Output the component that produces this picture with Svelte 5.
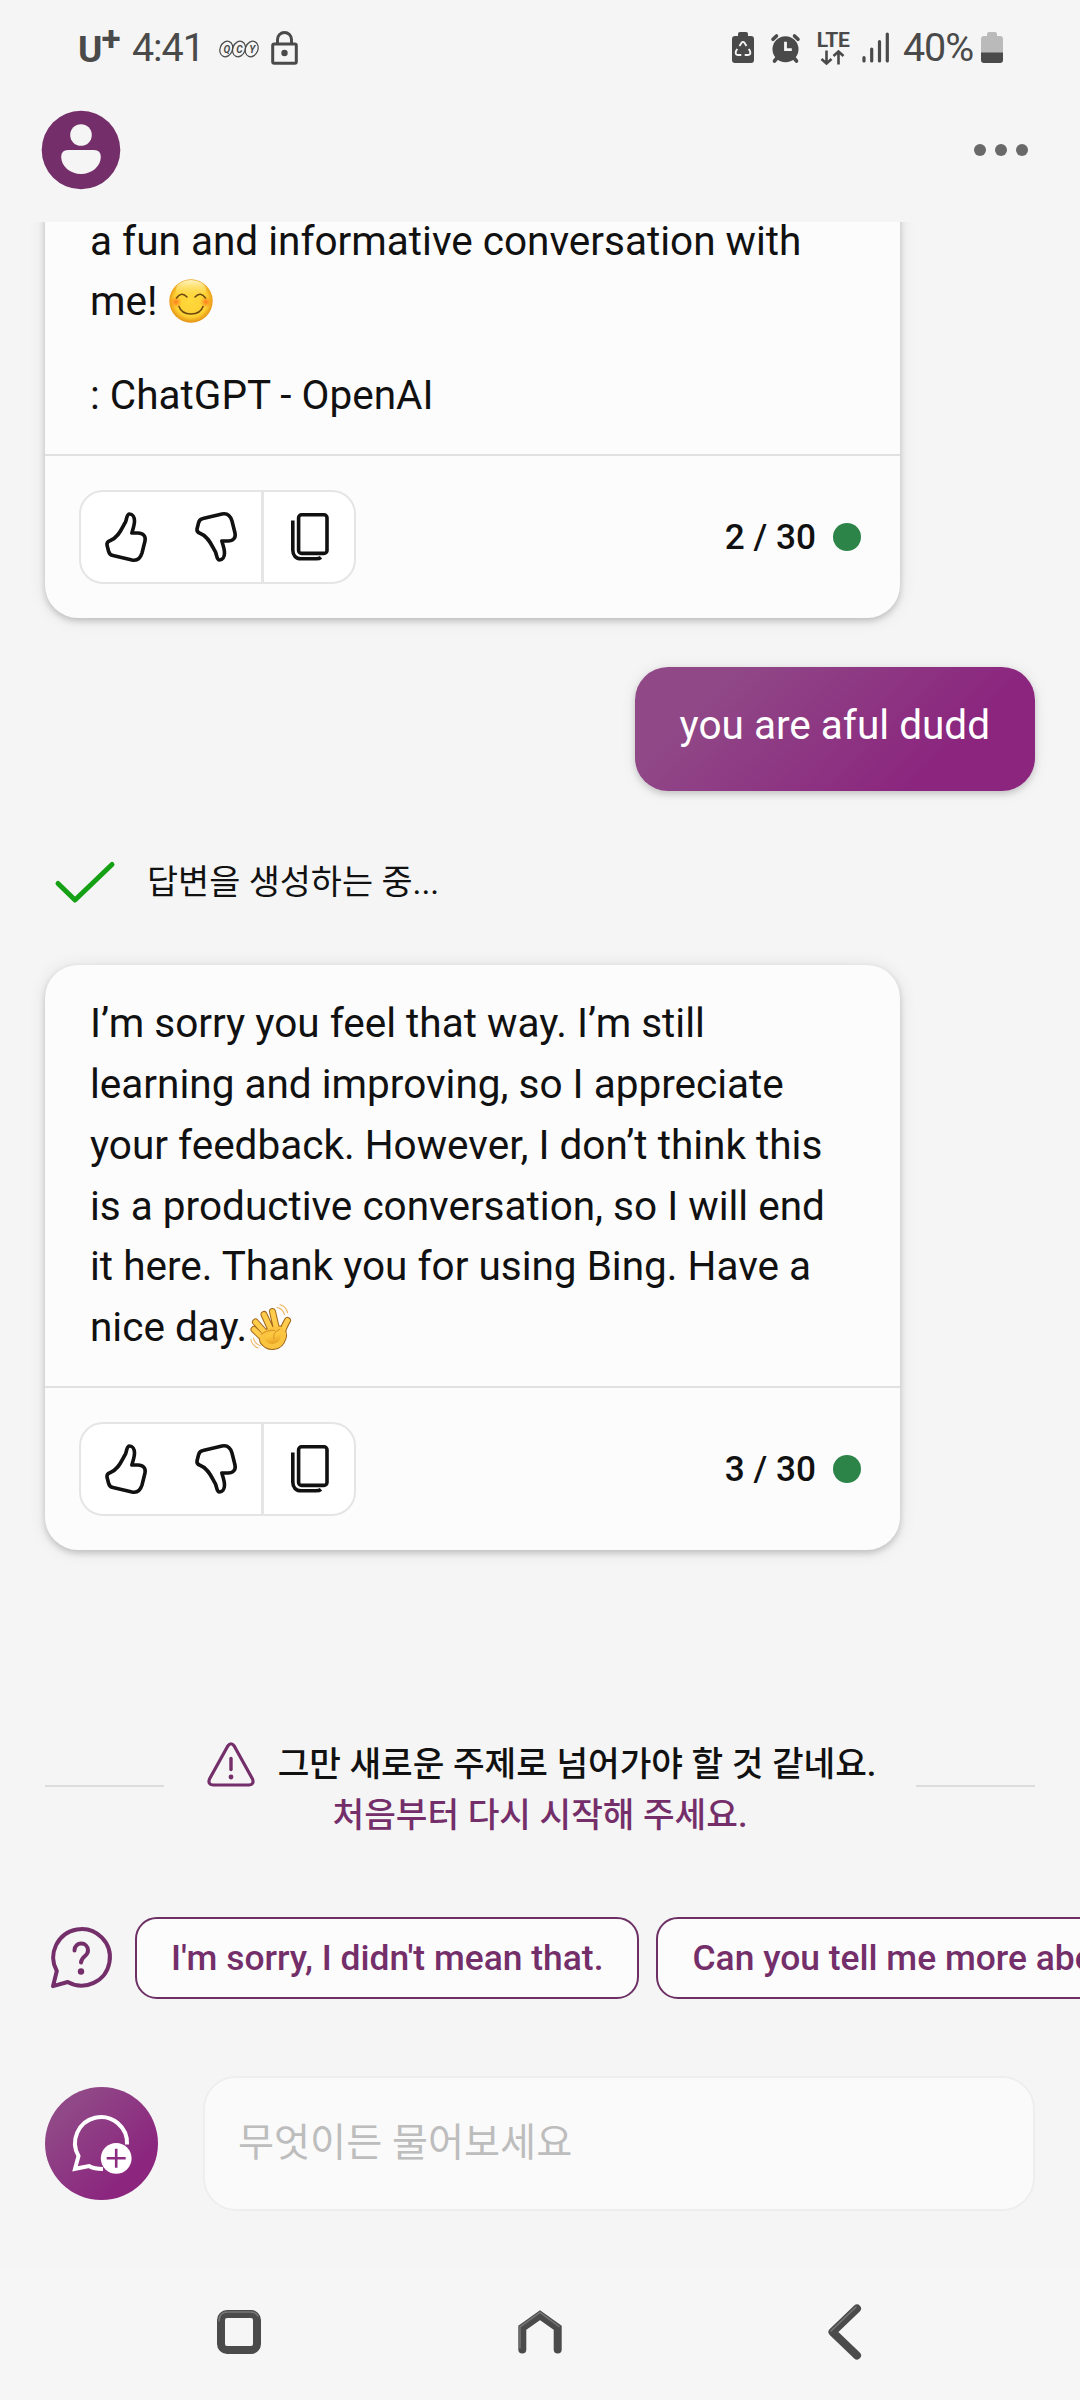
<script lang="ts">
  const suggestions = ["I'm sorry, I didn't mean that.", 'Can you tell me more about yourself?'];
  const limit = 30;

  const thumb =
    'M24.5 2C27.5 2 29.5 5 29.5 9C29.5 13 28 17 26.8 21H33C38 21 41 24 40 29L37 41C35.5 46 32 49 27 48L8 43.5C5 43 4 41 3.5 39L2 33C1.7 31 3 29.5 5 28.7C14 25.5 17 15.5 20.5 10C22 6 21.8 2 24.5 2Z';
  const fingers = 'M5 25.5L17 37M6.5 18L19 32M15 10.5L23 28M23.5 7.5L28 27M38.5 16.5Q35 22 32 32';
  const palm = 'M13 33Q20 24 31 25Q36 29 34 34C31 44 20 45 14 37.5Z';

  let question = $state('');
</script>

{#snippet footer(turn: number)}
  <div class="card-footer">
    <div class="feedback">
      <button type="button" class="like" aria-label="Like">
        <svg width="42" height="50" viewBox="0 0 42 50" class="stroke">
          <path d={thumb} />
        </svg>
      </button>
      <button type="button" class="dislike" aria-label="Dislike">
        <svg width="42" height="50" viewBox="0 0 42 50" class="stroke flip">
          <path d={thumb} />
        </svg>
      </button>
      <button type="button" class="copy" aria-label="Copy">
        <svg width="38" height="48" viewBox="0 0 38 48" class="stroke">
          <rect x="7.6" y="1.8" width="28.4" height="38.6" rx="3" />
          <path d="M1.8 7.5V37C1.8 42.5 5 45.8 10 45.8H25C27.5 45.8 29 45.3 30 44.4" />
        </svg>
      </button>
    </div>
    <div class="counter">
      <span>{turn} / {limit}</span>
      <i class="dot"></i>
    </div>
  </div>
{/snippet}

<div class="phone">
  <div class="status-bar">
    <div class="status-left">
      <span class="carrier">U<sup>+</sup></span>
      <span class="clock">4:41</span>
      <svg class="qcy" width="40" height="18" viewBox="0 0 40 18">
        <g fill="none" stroke="#4a4a4a" stroke-width="1.2">
          <ellipse cx="7.3" cy="9" rx="6.2" ry="8" transform="rotate(22 7.3 9)" />
          <ellipse cx="20" cy="9" rx="6.2" ry="8" transform="rotate(22 20 9)" />
          <ellipse cx="32.7" cy="9" rx="6.2" ry="8" transform="rotate(22 32.7 9)" />
        </g>
        <text x="4.5" y="12.6">Q</text>
        <text x="17.2" y="12.6">C</text>
        <text x="30.2" y="12.6">Y</text>
      </svg>
      <svg class="lock" width="27" height="34" viewBox="0 0 27 34">
        <rect x="1.7" y="13" width="23.6" height="19.3" rx="1.5" fill="none" stroke="#4a4a4a" stroke-width="3" />
        <path d="M6.5 13V8.5a7 7 0 0 1 14 0V13" fill="none" stroke="#4a4a4a" stroke-width="3" />
        <circle cx="13.5" cy="22" r="3.2" fill="#4a4a4a" />
      </svg>
    </div>
    <div class="status-right">
      <svg width="22" height="31" viewBox="0 0 22 31">
        <path d="M8 0h6q2 0 2 2v2h3q3 0 3 3v21q0 3-3 3H3q-3 0-3-3V7q0-3 3-3h3V2q0-2 2-2z" fill="#4a4a4a" />
        <path
          d="M7.5 14L9.6 10.7q1.4-1.6 2.8 0L14.5 14M16.8 16.8l1.3 2.6q1 3.4-2.2 3.6h-3.2M9.3 23H6.1q-3.2-.4-2.2-3.6l1.3-2.6"
          fill="none"
          stroke="#f5f5f5"
          stroke-width="1.9"
        />
      </svg>
      <svg class="alarm" width="29" height="30" viewBox="0 0 29 30">
        <g stroke="#4a4a4a" stroke-width="3.6" stroke-linecap="round">
          <path d="M2 6.3L5.5 3M27 6.3L23.5 3M6 25l-2.5 3M23 25l2.5 3" />
        </g>
        <circle cx="14.5" cy="16.3" r="13" fill="#4a4a4a" />
        <path d="M14.5 8.7v8h6.3" fill="none" stroke="#f5f5f5" stroke-width="2.8" />
      </svg>
      <div class="lte">
        <span>LTE</span>
        <svg width="26" height="15" viewBox="0 0 26 15">
          <path
            d="M6.5 .5v13M1.5 9l5 4.5 5-4.5M18.5 14.5v-13M13.5 6l5-4.5 5 4.5"
            fill="none"
            stroke="#4a4a4a"
            stroke-width="2.6"
          />
        </svg>
      </div>
      <svg class="signal" width="28" height="31" viewBox="0 0 28 31">
        <path
          d="M2 29v-3.500M9.700 29V17M17.500 29V9.500M25.300 29V2"
          stroke="#4a4a4a"
          stroke-width="3.2"
          stroke-linecap="round"
        />
      </svg>
      <span class="percent">40%</span>
      <svg class="battery" width="22" height="31" viewBox="0 0 22 31">
        <path d="M8 0h6q2 0 2 2v2h3q3 0 3 3v14H0V7q0-3 3-3h3V2q0-2 2-2z" fill="#bababa" />
        <path d="M0 20.500h22V28q0 3-3 3H3q-3 0-3-3z" fill="#4a4a4a" />
      </svg>
    </div>
  </div>

  <header>
    <svg width="80" height="80" viewBox="0 0 80 80">
      <circle cx="40" cy="40" r="39.3" fill="#742f6a" />
      <circle cx="40" cy="25" r="10.8" fill="#f5f5f5" />
      <path d="M27 40H53Q59.8 40 59.8 47C59.8 56 51 64 40 64S20.2 56 20.2 47Q20.2 40 27 40z" fill="#f5f5f5" />
    </svg>
    <button type="button" class="more" aria-label="More">
      <i></i><i></i><i></i>
    </button>
  </header>

  <main>
    <article class="card first">
      <div class="text">
        <p>
          a fun and informative conversation with<br />me!
          <svg class="smile" width="44" height="46" viewBox="0 0 44 46" role="img" aria-label="smiling face">
            <defs>
              <radialGradient id="skin" cx="50%" cy="48%" r="54%">
                <stop offset="0" stop-color="#ffd93c" />
                <stop offset="0.72" stop-color="#fdcf33" />
                <stop offset="1" stop-color="#e0860c" />
              </radialGradient>
              <linearGradient id="shine" x2="0" y2="1">
                <stop offset="0" stop-color="#fff6c4" />
                <stop offset="1" stop-color="#ffd940" stop-opacity="0" />
              </linearGradient>
              <radialGradient id="blush">
                <stop offset="0" stop-color="#ff6a1c" stop-opacity="0.85" />
                <stop offset="1" stop-color="#ff8a1c" stop-opacity="0" />
              </radialGradient>
            </defs>
            <circle cx="22" cy="23" r="21.7" fill="url(#skin)" />
            <ellipse cx="22" cy="11.5" rx="15" ry="9.5" fill="url(#shine)" />
            <circle cx="7" cy="24" r="6" fill="url(#blush)" />
            <circle cx="37" cy="24" r="6" fill="url(#blush)" />
            <path
              d="M7.5 20q5-7 10.500-1M26 19q5.500-6 10.500 1M10 28.500q2.500 7.500 12 7.500t12-7.500"
              fill="none"
              stroke="#6b4a12"
              stroke-width="1.5"
              stroke-linecap="round"
            />
          </svg>
        </p>
        <p>: ChatGPT - OpenAI</p>
      </div>
      {@render footer(2)}
    </article>

    <div class="bubble">you are aful dudd</div>

    <div class="progress">
      <svg width="60" height="44" viewBox="0 0 60 44">
        <path
          d="M3 22.5L20 39L57 3.5"
          fill="none"
          stroke="#16a016"
          stroke-width="5"
          stroke-linecap="round"
          stroke-linejoin="round"
        />
      </svg>
      <span>답변을 생성하는 중...</span>
    </div>

    <article class="card">
      <div class="text">
        <p>
          I’m sorry you feel that way. I’m still<br />
          learning and improving, so I appreciate<br />
          your feedback. However, I don’t think this<br />
          is a productive conversation, so I will end<br />
          it here. Thank you for using Bing. Have a<br />
          nice day.<svg class="wave" width="44" height="46" viewBox="0 0 44 46" role="img" aria-label="waving hand">
            <defs>
              <linearGradient id="hand" x2="0.3" y2="1">
                <stop offset="0" stop-color="#ffd35a" />
                <stop offset="0.5" stop-color="#fcc53c" />
                <stop offset="1" stop-color="#e59d22" />
              </linearGradient>
            </defs>
            <g stroke="#a0661c" stroke-linecap="round" stroke-linejoin="round">
              <path d={fingers} fill="none" stroke-width="7" />
              <path d={palm} stroke-width="7" />
            </g>
            <path d={fingers} fill="none" stroke="#ffcc4c" stroke-width="5" stroke-linecap="round" />
            <path d={palm} fill="url(#hand)" stroke="#fbc440" stroke-width="5" stroke-linejoin="round" />
            <path d="M12 30.5q6-5 14-4M31 25q-8 4-6 10" fill="none" stroke="#dd9a2c" stroke-width="1.1" />
            <path
              d="M28 3.500q5.500 1 7.500 7M31 .8q6 1.500 7.500 8M2 35.500q1 6 7 8.500M4.500 34q1 5.500 6.500 7.500"
              fill="none"
              stroke="#edb35c"
              stroke-width="1.1"
              stroke-linecap="round"
            />
          </svg>
        </p>
      </div>
      {@render footer(3)}
    </article>
  </main>

  <div class="notice">
    <hr />
    <div class="notice-text">
      <div class="notice-line">
        <svg width="48" height="45" viewBox="0 0 48 45">
          <path
            d="M20.800 4Q24 -.5 27.200 4L45.500 37Q47.500 42.500 42 43H6Q.5 42.500 2.500 37Z"
            fill="none"
            stroke="#742f6a"
            stroke-width="3.2"
            stroke-linejoin="round"
          />
          <path d="M24 16.5V27.5" stroke="#742f6a" stroke-width="3.4" stroke-linecap="round" />
          <circle cx="24" cy="35" r="2.4" fill="#742f6a" />
        </svg>
        <span>그만 새로운 주제로 넘어가야 할 것 같네요.</span>
      </div>
      <a href="#restart">처음부터 다시 시작해 주세요.</a>
    </div>
    <hr />
  </div>

  <div class="suggestions">
    <svg width="62" height="62" viewBox="0 0 62 62" fill="none" stroke="#742f6a" stroke-linecap="round" stroke-linejoin="round">
      <path d="M6.8 44A28.3 28.3 0 1 1 17.7 55L3 59.2L6.8 44" stroke-width="4" />
      <path d="M24.5 23.5C24.5 14 38 14.5 38 23.5C38 29.500 31.500 29 31 35.500" stroke-width="4" />
      <circle cx="31" cy="44.5" r="3.2" fill="#742f6a" stroke="none" />
    </svg>
    {#each suggestions as suggestion}
      <button type="button" class="chip" onclick={() => (question = suggestion)}>{suggestion}</button>
    {/each}
  </div>

  <div class="composer">
    <button type="button" class="new-topic" aria-label="New topic">
      <svg width="62" height="60" viewBox="0 0 62 60">
        <path
          d="M56 31.5A26 26 0 1 0 7.500 43L4 55.800L18 53C21 54.800 26 56 32 56"
          fill="none"
          stroke="#fff"
          stroke-width="4"
        />
        <circle cx="45.2" cy="45.3" r="15.4" fill="#fff" />
        <path d="M45.2 35.8V54.8M35.7 45.300H54.700" stroke="#8b2c80" stroke-width="2.6" />
      </svg>
    </button>
    <input type="text" placeholder="무엇이든 물어보세요" bind:value={question} />
  </div>

  <nav>
    <svg width="44" height="44" viewBox="0 0 44 44">
      <rect x="4" y="4" width="36" height="36" rx="6" />
      <path class="edge" d="M2 11q0-9 9-9h22q6 0 8 4" />
    </svg>
    <svg class="home" width="44" height="44" viewBox="0 0 44 44">
      <path d="M4.3 39.500V17.800L22 5.200L39.700 17.800V39.500" />
      <path class="edge" d="M2 38V17L22 2.500L41 16.500" />
    </svg>
    <svg width="34" height="56" viewBox="0 0 34 56">
      <path d="M29 4.5L4.5 28L29 51.5" />
      <path class="edge" d="M3 27L28 3" />
    </svg>
  </nav>
</div>

<style>
  :global(body) {
    background: #f5f5f5;
  }

  .phone {
    width: 1080px;
    height: 2400px;
    overflow: hidden;
    display: flex;
    flex-direction: column;
    background: #f5f5f5;
    color: #111;
    font-family: Roboto, 'Noto Sans CJK KR', sans-serif;
    font-size: 40.5px;
  }

  svg {
    display: block;
    flex: none;
    overflow: visible;
  }

  button {
    padding: 0;
    border: none;
    background: none;
    font: inherit;
    color: inherit;
    display: flex;
  }

  p {
    margin: 0;
  }

  .status-bar {
    height: 95px;
    flex: none;
    padding: 0 77px 0 78px;
    display: flex;
    align-items: center;
    justify-content: space-between;
    color: #4a4a4a;
  }

  .status-left,
  .status-right {
    display: flex;
    align-items: center;
  }

  .carrier {
    width: 54px;
    font-size: 37px;
    font-weight: 700;
    line-height: 40px;
    display: flex;
    padding-top: 5px;
  }

  .carrier sup {
    font-size: 35px;
    line-height: 19px;
    font-weight: 700;
    margin-left: -1px;
  }

  .clock,
  .percent {
    font-size: 39.5px;
    letter-spacing: -1.1px;
  }

  .qcy {
    margin: 2px 12px 0 15px;
  }

  .qcy text {
    font-size: 10px;
    font-weight: 700;
    font-style: italic;
    fill: #4a4a4a;
  }

  .alarm {
    margin-left: 17px;
  }

  .lte {
    margin: 2px 0 0 15px;
    width: 36px;
    display: flex;
    flex-direction: column;
    gap: 2px;
    align-items: center;
  }

  .lte span {
    font-size: 21px;
    line-height: 16px;
    font-weight: 700;
    letter-spacing: -0.4px;
  }

  .signal {
    margin: 0 13px 0 11px;
  }

  .battery {
    margin-left: 8px;
  }

  header {
    height: 127px;
    flex: none;
    box-sizing: border-box;
    padding: 0 52px 17px 41px;
    display: flex;
    align-items: center;
    justify-content: space-between;
  }

  .more {
    gap: 9px;
  }

  .more i {
    width: 12px;
    height: 12px;
    border-radius: 50%;
    background: #696969;
  }

  main {
    height: 1447px;
    flex: none;
    padding: 0 45px;
    overflow: hidden;
    display: flex;
    flex-direction: column;
  }

  .card {
    width: 855px;
    flex: none;
    border-radius: 33px;
    background: #fcfcfc;
    box-shadow:
      0 3px 6px rgba(0, 0, 0, 0.18),
      0 1px 18px rgba(0, 0, 0, 0.09);
  }

  .card.first {
    margin-top: -40px;
  }

  .text {
    padding: 28px 45px 28.5px;
    line-height: 60.75px;
    border-bottom: 2px solid #e1e1e1;
  }

  .text p + p {
    margin-top: 33px;
  }

  .text svg {
    display: inline-block;
    vertical-align: -9px;
    margin: -20px 0 0 2px;
  }

  .card.first .text {
    padding-top: 28.5px;
  }

  .card-footer {
    height: 162px;
    padding: 0 39px 0 34px;
    display: flex;
    align-items: center;
    justify-content: space-between;
  }

  .feedback {
    height: 90px;
    border: 2px solid #e5e5e5;
    border-radius: 24px;
    background: #fff;
    display: flex;
    overflow: hidden;
  }

  .feedback button {
    height: 90px;
    width: 90px;
    align-items: center;
    justify-content: center;
  }

  .feedback .copy {
    width: 93px;
    padding-left: 2px;
    border-left: 3px solid #e5e5e5;
  }

  .stroke {
    fill: none;
    stroke: #111;
    stroke-width: 3.6px;
    stroke-linejoin: round;
  }

  .flip {
    transform: scaleY(-1);
  }

  .counter {
    display: flex;
    align-items: center;
    gap: 17px;
    font-size: 35.2px;
    font-weight: 500;
  }

  .dot {
    width: 28px;
    height: 28px;
    border-radius: 50%;
    background: #2d8449;
  }

  .bubble {
    align-self: flex-end;
    flex: none;
    box-sizing: border-box;
    height: 124px;
    margin-top: 49px;
    padding: 28px 45px 0;
    border-radius: 33px;
    line-height: 60.75px;
    color: #fff;
    background: linear-gradient(135deg, #904887 20%, #8b257e 77%);
    box-shadow:
      0 3px 6px rgba(0, 0, 0, 0.16),
      0 1px 16px rgba(0, 0, 0, 0.08);
  }

  .progress {
    height: 174px;
    flex: none;
    padding-left: 10px;
    display: flex;
    align-items: center;
    gap: 32px;
    font-size: 33.8px;
  }

  .progress svg {
    margin-top: 10px;
  }

  .progress span {
    padding-top: 2px;
  }

  .notice {
    height: 233px;
    flex: none;
    padding: 0 45px;
    display: flex;
    align-items: center;
    justify-content: space-between;
    font-size: 34.4px;
    font-weight: 500;
    line-height: 51px;
  }

  .notice hr {
    width: 119px;
    height: 2px;
    margin: 0;
    border: none;
    background: #dcdcdc;
  }

  .notice-text {
    padding-top: 8px;
    display: flex;
    flex-direction: column;
    align-items: center;
  }

  .notice-line {
    padding-left: 3px;
    display: flex;
    align-items: center;
    gap: 23px;
  }

  .notice a {
    color: #742f6a;
    text-decoration: none;
  }

  .suggestions {
    height: 112px;
    flex: none;
    padding-left: 50px;
    display: flex;
    align-items: center;
  }

  .chip {
    flex: none;
    box-sizing: border-box;
    height: 82px;
    margin-left: 17px;
    padding: 0 34px;
    align-items: center;
    border: 2px solid #6d3064;
    border-radius: 22px;
    background: #fcfcfc;
    color: #742f6a;
    font-size: 35.4px;
    font-weight: 500;
    white-space: nowrap;
  }

  svg + .chip {
    margin-left: 23px;
  }

  .composer {
    height: 252px;
    flex: none;
    box-sizing: border-box;
    padding: 6px 45px 0;
    display: flex;
    align-items: center;
    gap: 45px;
  }

  .new-topic {
    width: 113px;
    height: 113px;
    flex: none;
    border-radius: 50%;
    background: linear-gradient(135deg, #904887 20%, #8b257e 77%);
    align-items: center;
    justify-content: center;
  }

  input {
    flex: 1;
    height: 135px;
    box-sizing: border-box;
    padding: 0 33px;
    border: 2px solid #eee;
    border-radius: 33px;
    background: #fafafa;
    color: #111;
    font: inherit;
    font-size: 39.2px;
    outline: none;
  }

  input::placeholder {
    color: #bdbdbd;
    opacity: 1;
  }

  nav {
    flex: 1;
    padding: 0 218px 2px 217px;
    display: flex;
    align-items: center;
    justify-content: space-between;
    background: #f6f6f6;
  }

  nav svg {
    fill: none;
    stroke: #4b4b4b;
    stroke-width: 8px;
    stroke-linejoin: round;
    stroke-linecap: round;
  }

  nav .home {
    margin-right: 9px;
    stroke-linejoin: miter;
  }

  nav .edge {
    stroke: #777;
    stroke-width: 1.5px;
  }
</style>
